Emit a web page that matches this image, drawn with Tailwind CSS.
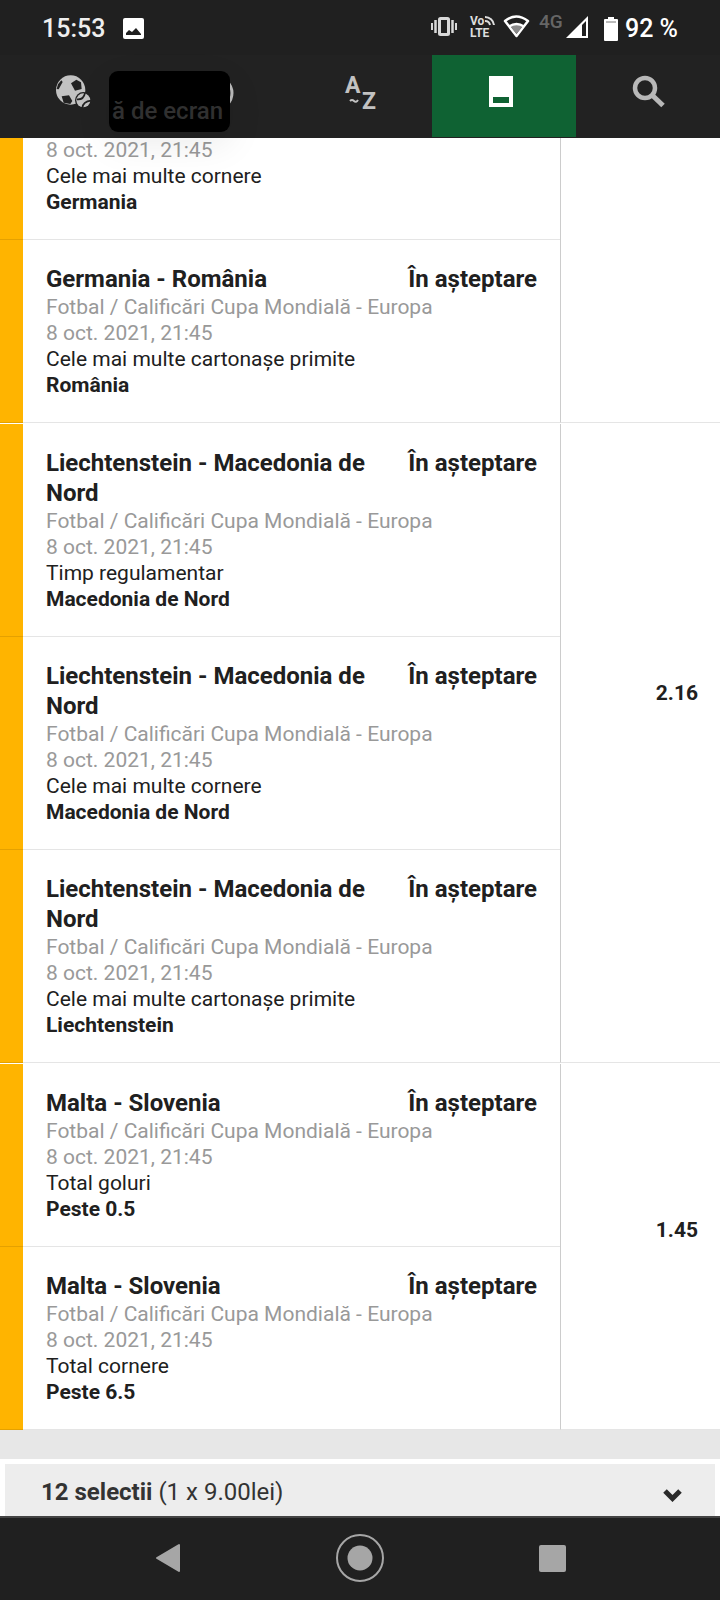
<!DOCTYPE html>
<html lang="ro">
<head>
    <meta charset="UTF-8">
    <meta name="viewport" content="width=device-width, initial-scale=1.0">
    <title>Biletele mele</title>
    <!-- Tailwind CSS for styling -->
    <script src="https://cdn.jsdelivr.net/npm/@tailwindcss/browser@4"></script>
</head>
<body class="h-screen flex flex-col overflow-hidden bg-[#e7e7e7] font-['Roboto','Noto_Sans',sans-serif] text-[#202020]">

    <!-- Status bar -->
    <div class="h-[55px] shrink-0 flex items-center justify-between pt-0.5 pl-[42px] pr-[42px] bg-[#202020] text-white text-[25px] font-medium">
        <div class="flex items-center gap-[18px]">
            <span class="text-[#eee]">15:53</span>
            <svg class="w-[21px] h-[21px]" viewBox="0 0 21 21" aria-hidden="true">
                <rect width="21" height="21" rx="2" fill="#fff"/>
                <path d="M3 17v-2l3-3 3 2 4-4 5 6v1z" fill="#202020"/>
            </svg>
        </div>
        <div class="flex items-center">
            <svg class="w-[160px] h-[35px] overflow-visible" viewBox="0 0 160 35" aria-hidden="true">
                <!-- vibrate -->
                <g stroke="#d8d8d8" fill="none">
                    <rect x="11.500" y="7.500" width="9" height="16" rx="1" stroke-width="3"/>
                    <path d="M7.500 9v13M24.500 9v13" stroke-width="2.500"/>
                    <path d="M4 12v7M28 12v7" stroke-width="2"/>
                </g>
                <!-- VoLTE -->
                <g fill="#ddd" font-family="Roboto" font-weight="700">
                    <text x="42" y="14" font-size="12">Vo</text>
                    <text x="42" y="26" font-size="12">LTE</text>
                </g>
                <path d="M57 6a9 9 0 0 1 9 8M57 10a5 5 0 0 1 5 4" stroke="#ddd" stroke-width="2" fill="none"/>
                <!-- wifi -->
                <path d="M77 10q11-9 23 0L88.500 25z" stroke="#fff" stroke-width="2.500" stroke-linejoin="round" fill="none"/>
                <path d="M82 15q6.500-4 13 0L88.500 23z" fill="#8a8a8a"/>
                <path d="M81 15.500q7.500-5 15 0" stroke="#fff" stroke-width="2.500" fill="none"/>
                <!-- signal -->
                <text x="111" y="17" font-size="19" font-weight="500" fill="#666" font-family="Roboto">4G</text>
                <path d="M160 5v22h-22z" fill="#fff"/>
                <path d="M154 14l4-4v15h-4z" fill="#202020"/>
            </svg>
            <svg class="w-[14px] h-[24px] ml-[16px] mr-[7px]" viewBox="0 0 14 24" aria-hidden="true">
                <path d="M4 0h6v2h3q1 0 1 1v20q0 1-1 1H1q-1 0-1-1V3q0-1 1-1h3z" fill="#fff"/>
                <path d="M2 5h10" stroke="#777"/>
            </svg>
            <span>92 %</span>
        </div>
    </div>

    <!-- Tabs -->
    <nav class="relative z-10 h-[83px] shrink-0 grid grid-cols-5 bg-[#222] border-b border-[#222]">
        <button class="flex justify-center pt-[20px] pl-[2px]" aria-label="Sporturi">
            <svg class="w-[36px] h-[33px]" viewBox="0 0 108 99" aria-hidden="true">
                <circle cx="47" cy="45" r="44" fill="#c2c2c2"/>
                <path d="M48 25l16-11 14 8 2 20-20 5zM20 64l22-3 10 17-6 9-20-4zM5 42l4-14 10-12 4 5-12 22z" fill="#222"/>
                <circle cx="85" cy="76" r="25" fill="#222"/>
                <circle cx="85" cy="76" r="21" fill="#c2c2c2"/>
                <path d="M66 73q20 2 24-19M82 99q2-20 26-22" stroke="#222" stroke-width="5" fill="none"/>
            </svg>
        </button>
        <button class="relative flex justify-center pt-[20px]" aria-label="Live">
            <svg class="w-[36px] h-[36px]" viewBox="0 0 36 36" aria-hidden="true">
                <circle cx="18" cy="18" r="16" stroke="#bbb" stroke-width="3" fill="none"/>
            </svg>
            <!-- Toast over the tab -->
            <span class="absolute left-[-35px] top-[16px] w-[121px] h-[61px] pt-[25px] pr-1 rounded-[9px] bg-black text-[#303030] text-[24px] leading-[30px] font-medium text-center whitespace-nowrap shadow-[0_12px_36px_rgba(0,0,0,0.08)]">ă de ecran</span>
        </button>
        <button class="flex justify-center pt-[16px] pl-[2px]" aria-label="Sporturi A-Z">
            <svg class="w-[32px] h-[44px] overflow-visible" viewBox="0 0 32 44" font-family="Roboto" font-weight="700" fill="#c2c2c2" aria-hidden="true">
                <text x="0" y="22" font-size="23">A</text>
                <text x="17" y="38" font-size="23">Z</text>
                <path d="M5 30q2-2 4 0t4-1" stroke="#c2c2c2" stroke-width="2" fill="none"/>
            </svg>
        </button>
        <button class="flex justify-center pt-[21px] pr-[6px] bg-[#0f6233]" aria-label="Bilete">
            <svg class="w-[24px] h-[31px]" viewBox="0 0 24 31" aria-hidden="true">
                <path d="M0 0h24v31H0z" fill="#fff"/>
                <path d="M4 21h16v6H4z" fill="#0f6233"/>
            </svg>
        </button>
        <button class="flex justify-center pt-[20px]" aria-label="Căutare">
            <svg class="w-[33px] h-[33px]" viewBox="0 0 33 33" stroke="#b8b8b8" fill="none" aria-hidden="true">
                <circle cx="13" cy="13" r="10" stroke-width="4.500"/>
                <path d="M20 20l11 10.500" stroke-width="5"/>
            </svg>
        </button>
    </nav>

    <!-- Bet selections -->
    <main class="flex-1 min-h-0 overflow-hidden -mt-px">
        <div id="groups" class="flex flex-col gap-px bg-white"></div>
    </main>

    <!-- Bet slip summary -->
    <div class="shrink-0 bg-white pt-[5px] px-[5px]">
        <button class="w-full h-[52px] flex items-center justify-between pt-1 pl-[36px] pr-[33px] bg-[#ededed] text-[24px] text-[#333]">
            <span><b>12 selectii</b> (1 x 9.00lei)</span>
            <svg class="w-[19px] h-[14px] mt-[6px]" viewBox="0 0 19 14" aria-hidden="true">
                <path d="M2 3l7.500 7.500L17 3" stroke="#2a2a2a" stroke-width="5" fill="none"/>
            </svg>
        </button>
    </div>

    <!-- System navigation -->
    <nav class="h-[84px] shrink-0 grid grid-cols-3 px-[10%] pb-0.5 bg-[#202020] border-t-2 border-[#444]">
        <button class="flex items-center justify-center" aria-label="Înapoi">
            <svg class="w-[26px] h-[30px]" viewBox="0 0 26 30" aria-hidden="true">
                <path d="M2 15L24 2v26z" fill="#a6a6a6" stroke="#a6a6a6" stroke-width="2" stroke-linejoin="round"/>
            </svg>
        </button>
        <button class="flex items-center justify-center" aria-label="Acasă">
            <svg class="w-[50px] h-[50px]" viewBox="0 0 50 50" aria-hidden="true">
                <circle cx="25" cy="25" r="23" stroke="#a6a6a6" stroke-width="2" fill="none"/>
                <circle cx="25" cy="25" r="12.500" fill="#a6a6a6"/>
            </svg>
        </button>
        <button class="flex items-center justify-center" aria-label="Recente">
            <span class="size-[27px] rounded-[2px] bg-[#a6a6a6]"></span>
        </button>
    </nav>

    <script>
        const league = 'Fotbal / Calificări Cupa Mondială - Europa';
        const date = '8 oct. 2021, 21:45';

        // Each group is one bet; the odds belong to the whole group
        const groups = [
            { odds: '', pad: '', rows: [
                { partial: true, market: 'Cele mai multe cornere', pick: 'Germania' },
                { match: 'Germania - România', market: 'Cele mai multe cartonașe primite', pick: 'România' }
            ] },
            { odds: '2.16', pad: 'pt-[256px]', rows: [
                { match: 'Liechtenstein - Macedonia de Nord', market: 'Timp regulamentar', pick: 'Macedonia de Nord' },
                { match: 'Liechtenstein - Macedonia de Nord', market: 'Cele mai multe cornere', pick: 'Macedonia de Nord' },
                { match: 'Liechtenstein - Macedonia de Nord', market: 'Cele mai multe cartonașe primite', pick: 'Liechtenstein' }
            ] },
            { odds: '1.45', pad: 'pt-[153px]', rows: [
                { match: 'Malta - Slovenia', market: 'Total goluri', pick: 'Peste 0.5' },
                { match: 'Malta - Slovenia', market: 'Total cornere', pick: 'Peste 6.5' }
            ] }
        ];

        function rowHtml(row) {
            const head = row.partial ? '' : `
                <div class="flex justify-between gap-4 text-[24px] leading-[30px] font-bold">
                    <h2>${row.match}</h2>
                    <span class="whitespace-nowrap">În așteptare</span>
                </div>
                <p class="text-[#999]">${league}</p>`;
            return `
                <article class="flex border-b border-black/10 bg-[linear-gradient(to_right,#ffb400_23px,#fff_23px)]">
                    <div class="flex-1 pl-[46px] pr-[23px] ${row.partial ? 'pb-6' : 'py-6'} text-[21px] leading-[26px]">
                        ${head}
                        <p class="text-[#999]">${date}</p>
                        <p>${row.market}</p>
                        <p class="font-bold">${row.pick}</p>
                    </div>
                </article>`;
        }

        document.getElementById('groups').innerHTML = groups.map(group => `
            <section class="flex">
                <div class="flex-1">${group.rows.map(rowHtml).join('')}</div>
                <div class="w-[160px] shrink-0 border-l border-l-[#ccc] border-b border-b-black/10 pr-[22px] ${group.pad} text-right text-[21px] leading-[26px] font-bold">${group.odds}</div>
            </section>`).join('');
    </script>

</body>
</html>
